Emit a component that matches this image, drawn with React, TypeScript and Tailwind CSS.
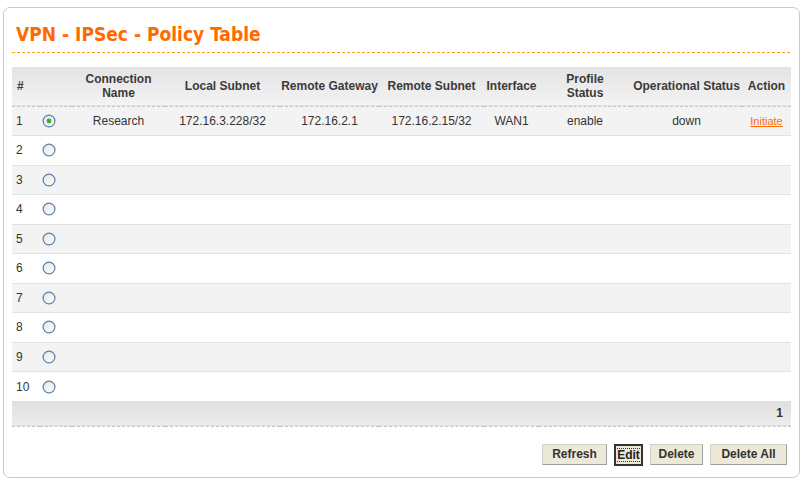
import React from "react";

const Radio = ({ checked }: { checked?: boolean }) => (
  <svg width="14" height="14" viewBox="0 0 14 14" className="block">
    <defs>
      <linearGradient id={checked ? "rg1" : "rg0"} x1="0" y1="0" x2="1" y2="1">
        <stop offset="0" stopColor="#e4e4e4" />
        <stop offset="1" stopColor="#ffffff" />
      </linearGradient>
    </defs>
    <circle cx="7" cy="7" r="5.9" fill={`url(#${checked ? "rg1" : "rg0"})`} stroke="#5a7fa8" strokeWidth="1.2" />
    {checked && <circle cx="7" cy="7" r="2.4" fill="#2fae3a" />}
  </svg>
);

const rows = Array.from({ length: 10 }, (_, i) => i + 1);

export default function App() {
  return (
    <div className="w-[805px] h-[481px] bg-white pt-[7px] pl-[3px] pr-[5px] pb-[3px]" style={{ fontFamily: '"Liberation Sans", Arial, sans-serif' }}>
      <div className="h-[471px] border border-[#c9c9c9] rounded-[7px] pl-[8px] pr-[8px] pt-[14px]">
        <div
          className="pl-[4px] text-[#ff6a00] font-bold text-[19px] leading-[24px] h-[30px]"
          style={{ fontFamily: '"DejaVu Sans Condensed", "DejaVu Sans", sans-serif' }}
        >
          VPN - IPSec - Policy Table
        </div>
        <div className="border-t border-dashed border-[#f7a21a] mr-[1px]" />
        <div className="h-[14px]" />
        <table className="w-[779px] table-fixed border-collapse text-[12px] text-[#333]">
          <colgroup>
            <col className="w-[28px]" />
            <col className="w-[32px]" />
            <col className="w-[93px]" />
            <col className="w-[115px]" />
            <col className="w-[99px]" />
            <col className="w-[105px]" />
            <col className="w-[55px]" />
            <col className="w-[92px]" />
            <col className="w-[111px]" />
            <col className="w-[49px]" />
          </colgroup>
          <thead>
            <tr className="h-[39px] bg-gradient-to-b from-[#e3e3e3] to-[#f3f3f3] border-b border-dashed border-[#c4c4c4] font-bold text-[#3a3a3a] leading-[14px]">
              <th className="text-left pl-[5px] font-bold">#</th>
              <th></th>
              <th className="font-bold">Connection<br />Name</th>
              <th className="font-bold">Local Subnet</th>
              <th className="font-bold whitespace-nowrap">Remote Gateway</th>
              <th className="font-bold whitespace-nowrap">Remote Subnet</th>
              <th className="font-bold">Interface</th>
              <th className="font-bold">Profile<br />Status</th>
              <th className="font-bold whitespace-nowrap">Operational Status</th>
              <th className="font-bold">Action</th>
            </tr>
          </thead>
          <tbody>
            {rows.map((n) => (
              <tr
                key={n}
                className={`h-[29.5px] ${n % 2 === 1 ? "bg-[#f3f3f3]" : "bg-white"} ${n < 10 ? "border-b border-[#e2e2e2]" : ""}`}
              >
                <td className="pl-[4px]">{n}</td>
                <td className="pl-[2px]"><Radio checked={n === 1} /></td>
                {n === 1 ? (
                  <>
                    <td className="text-center">Research</td>
                    <td className="text-center">172.16.3.228/32</td>
                    <td className="text-center">172.16.2.1</td>
                    <td className="text-center">172.16.2.15/32</td>
                    <td className="text-center">WAN1</td>
                    <td className="text-center">enable</td>
                    <td className="text-center">down</td>
                    <td className="text-center text-[11px]">
                      <span className="text-[#ff6a00] underline">Initiate</span>
                    </td>
                  </>
                ) : (
                  <>
                    <td></td><td></td><td></td><td></td><td></td><td></td><td></td><td></td>
                  </>
                )}
              </tr>
            ))}
            <tr className="h-[25px] bg-gradient-to-b from-[#dfdfdf] to-[#ececec] border-b border-dashed border-[#c4c4c4]">
              <td colSpan={10} className="text-right pr-[8px] font-bold">1</td>
            </tr>
          </tbody>
        </table>
        <div className="flex justify-end gap-[7px] pr-[4px] pt-[17px]">
          <button className="h-[21px] w-[65px] bg-[#ece9d8] border border-[#d4d0c8] border-b-[#a0a0a0] border-r-[#a0a0a0] text-[12px] font-bold text-[#333] leading-none">Refresh</button>
          <button className="h-[22px] w-[29px] bg-[#ece9d8] border-2 border-[#333] text-[12px] font-bold text-[#222] leading-none flex items-center justify-center">
            <span className="outline outline-1 outline-dotted outline-[#333] px-[1px]">Edit</span>
          </button>
          <button className="h-[21px] w-[53px] bg-[#ece9d8] border border-[#d4d0c8] border-b-[#a0a0a0] border-r-[#a0a0a0] text-[12px] font-bold text-[#333] leading-none">Delete</button>
          <button className="h-[21px] w-[77px] bg-[#ece9d8] border border-[#d4d0c8] border-b-[#a0a0a0] border-r-[#a0a0a0] text-[12px] font-bold text-[#333] leading-none">Delete All</button>
        </div>
      </div>
    </div>
  );
}
